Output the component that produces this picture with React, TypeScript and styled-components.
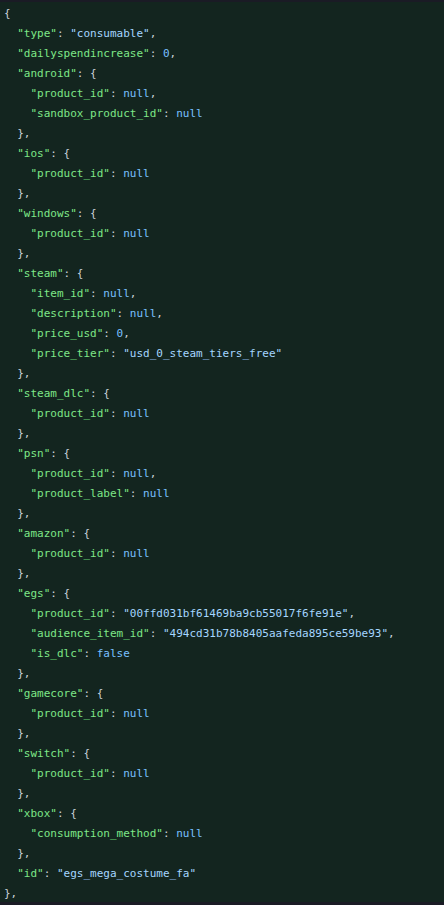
import React from "react";
import styled, { createGlobalStyle } from "styled-components";

const Global = createGlobalStyle`
  html, body {
    margin: 0;
    padding: 0;
    background: #1a1b25;
  }
  #root {
    min-height: 905px;
  }
`;

const Page = styled.div`
  padding-top: 2px;
  background: #1a1b25;
  min-height: 905px;
  box-sizing: border-box;
`;

const CodeBlock = styled.pre`
  margin: 0;
  padding: 2px 0 0 4px;
  height: 900px;
  box-sizing: border-box;
  background: #13251f;
  font-family: "DejaVu Sans Mono", "Liberation Mono", monospace;
  font-size: 11px;
  line-height: 20px;
  color: #c9d1d9;
  white-space: pre;
  overflow: hidden;
`;

const Line = styled.div<{ $indent: number }>`
  height: 20px;
  padding-left: ${(p) => p.$indent * 13.24}px;
`;

const Key = styled.span`
  color: #7ee787;
`;
const Str = styled.span`
  color: #a5d6ff;
`;
const Const = styled.span`
  color: #79c0ff;
`;
const Punc = styled.span`
  color: #c9d1d9;
`;

type Val = string | number | boolean | null | { [k: string]: Val };

const data: { [k: string]: Val } = {
  type: "consumable",
  dailyspendincrease: 0,
  android: { product_id: null, sandbox_product_id: null },
  ios: { product_id: null },
  windows: { product_id: null },
  steam: {
    item_id: null,
    description: null,
    price_usd: 0,
    price_tier: "usd_0_steam_tiers_free",
  },
  steam_dlc: { product_id: null },
  psn: { product_id: null, product_label: null },
  amazon: { product_id: null },
  egs: {
    product_id: "00ffd031bf61469ba9cb55017f6fe91e",
    audience_item_id: "494cd31b78b8405aafeda895ce59be93",
    is_dlc: false,
  },
  gamecore: { product_id: null },
  switch: { product_id: null },
  xbox: { consumption_method: null },
  id: "egs_mega_costume_fa",
};

function renderLines(obj: { [k: string]: Val }, indent: number, out: React.ReactNode[]) {
  const keys = Object.keys(obj);
  keys.forEach((k, i) => {
    const v = obj[k];
    const comma = i < keys.length - 1 ? "," : "";
    if (v !== null && typeof v === "object") {
      out.push(
        <Line key={out.length} $indent={indent}>
          <Key>"{k}"</Key>
          <Punc>: {"{"}</Punc>
        </Line>
      );
      renderLines(v, indent + 1, out);
      out.push(
        <Line key={out.length} $indent={indent}>
          <Punc>{"}" + comma}</Punc>
        </Line>
      );
    } else {
      const valNode =
        typeof v === "string" ? <Str>"{v}"</Str> : <Const>{String(v)}</Const>;
      out.push(
        <Line key={out.length} $indent={indent}>
          <Key>"{k}"</Key>
          <Punc>: </Punc>
          {valNode}
          <Punc>{comma}</Punc>
        </Line>
      );
    }
  });
}

export default function App() {
  const lines: React.ReactNode[] = [];
  lines.push(
    <Line key="open" $indent={0}>
      <Punc>{"{"}</Punc>
    </Line>
  );
  renderLines(data, 1, lines);
  lines.push(
    <Line key="close" $indent={0}>
      <Punc>{"},"}</Punc>
    </Line>
  );
  return (
    <>
      <Global />
      <Page>
        <CodeBlock>{lines}</CodeBlock>
      </Page>
    </>
  );
}
